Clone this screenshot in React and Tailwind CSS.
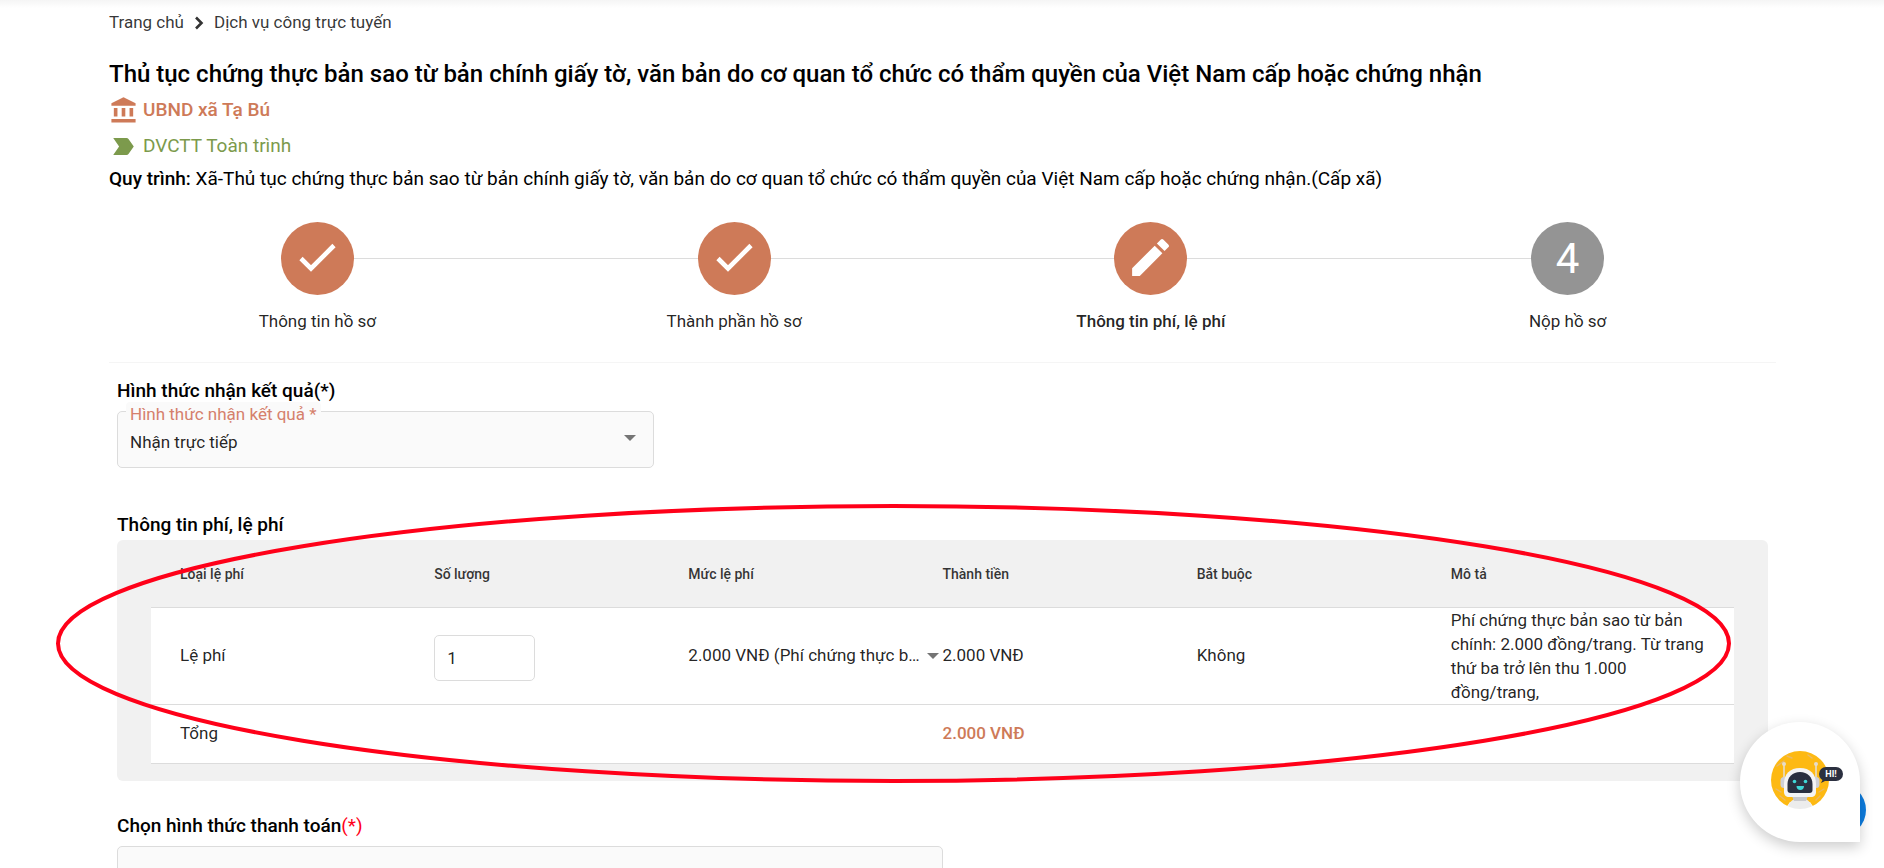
import { useState } from "react";
import { MdAccountBalance, MdEdit, MdLabelImportant } from "react-icons/md";

const steps = [
  { label: "Thông tin hồ sơ", state: "done" },
  { label: "Thành phần hồ sơ", state: "done" },
  { label: "Thông tin phí, lệ phí", state: "edit" },
  { label: "Nộp hồ sơ", state: "todo" },
];

const columns = ["Loại lệ phí", "Số lượng", "Mức lệ phí", "Thành tiền", "Bắt buộc", "Mô tả"];

export default function App() {
  return (
    <div className="relative h-screen overflow-hidden bg-white font-['Roboto',sans-serif] text-[17px] text-black/87">
      <div className="absolute inset-x-0 top-0 h-2 bg-linear-to-b from-neutral-100 to-white" />
      <main className="relative pt-[11px] pr-27 pl-[109px]">
        <Breadcrumb />
        <header className="mt-[23px] text-black">
          <h1 className="text-2xl leading-8 font-medium">
            Thủ tục chứng thực bản sao từ bản chính giấy tờ, văn bản do cơ quan tổ chức có thẩm quyền của Việt Nam cấp hoặc chứng nhận
          </h1>
          <p className="mt-1 flex h-8 items-center gap-[5px] text-[19px] font-medium text-[#ce7a58]">
            <MdAccountBalance size={29} />
            UBND xã Tạ Bú
          </p>
          <p className="mt-1 flex h-8 items-center gap-[5px] text-[19px] text-[#7c9a4c]">
            <MdLabelImportant size={29} />
            DVCTT Toàn trình
          </p>
          <p className="mt-[3px] text-[19px] leading-7">
            <b className="font-medium">Quy trình:</b> Xã-Thủ tục chứng thực bản sao từ bản chính giấy tờ, văn bản do cơ quan tổ chức có thẩm quyền của Việt Nam cấp hoặc chứng nhận.(Cấp xã)
          </p>
        </header>
        <Stepper />
        <form className="px-2 pt-3.5">
          <ReceiveSection />
          <FeeSection />
          <PaymentSection />
        </form>
      </main>
      <svg className="pointer-events-none absolute top-0 left-0 h-[868px] w-[1884px]" viewBox="0 0 1884 868" fill="none" aria-hidden="true">
        <ellipse cx="893.500" cy="643.500" rx="835.500" ry="137.500" stroke="#ff0019" strokeWidth="4" />
      </svg>
      <ChatWidget />
    </div>
  );
}

function Breadcrumb() {
  return (
    <nav className="flex h-6 items-center gap-2.5 text-black/80">
      <a href="#home">Trang chủ</a>
      <svg className="h-3.5 w-2.5" viewBox="0 0 10 14" fill="none" stroke="currentColor" strokeWidth="2.6" aria-hidden="true">
        <path d="M2 1.500L7.500 7 2 12.500" />
      </svg>
      <a href="#services">Dịch vụ công trực tuyến</a>
    </nav>
  );
}

function Stepper() {
  return (
    <ol className="mt-[29px] grid grid-cols-4 border-b border-neutral-100 pb-[29px]">
      {steps.map((s, i) => (
        <li key={s.label} className="flex flex-col items-center">
          <div className="flex w-full items-center">
            <span className={i === 0 ? "h-px flex-1" : "h-px flex-1 bg-[#dcdcdc]"} />
            <StepIcon state={s.state} index={i} />
            <span className={i === 3 ? "h-px flex-1" : "h-px flex-1 bg-[#dcdcdc]"} />
          </div>
          <span className={s.state === "edit" ? "mt-3.5 leading-6 font-medium" : "mt-3.5 leading-6"}>
            {s.label}
          </span>
        </li>
      ))}
    </ol>
  );
}

function StepIcon({ state, index }) {
  if (state === "todo") {
    return (
      <span className="flex size-[73px] items-center justify-center rounded-full bg-[#949494] text-[42px] leading-none text-white">
        {index + 1}
      </span>
    );
  }
  return (
    <span className="flex size-[73px] items-center justify-center rounded-full bg-[#ce7a58] pb-0.5 text-white">
      {state === "done" ? <Check /> : <MdEdit size={49} />}
    </span>
  );
}

function Check() {
  return (
    <svg className="size-12" viewBox="0 0 48 48" fill="none" stroke="currentColor" strokeWidth="4.6" aria-hidden="true">
      <path d="M8 24.500l10 10L41 11.500" />
    </svg>
  );
}

function Arrow() {
  return (
    <svg className="pointer-events-none h-1.5 w-3 shrink-0" viewBox="0 0 12 6" aria-hidden="true">
      <path d="M0 0h12L6 6z" fill="#757575" />
    </svg>
  );
}

function ReceiveSection() {
  return (
    <section>
      <h2 className="text-[19px] leading-7 font-medium text-black">Hình thức nhận kết quả(*)</h2>
      <div className="relative mt-1.5 flex h-[57px] w-[32.5%] items-center rounded-[5px] border border-[#dcdcdc] bg-neutral-50">
        <label htmlFor="receive" className="absolute -top-2.5 left-2 rounded-sm bg-neutral-50 px-1 leading-6 text-[#d5806c]">
          Hình thức nhận kết quả *
        </label>
        <select id="receive" className="w-full appearance-none bg-transparent px-3 pt-1.5 outline-none">
          <option>Nhận trực tiếp</option>
        </select>
        <span className="pointer-events-none absolute top-[23px] right-[17px] flex">
          <Arrow />
        </span>
      </div>
    </section>
  );
}

function FeeSection() {
  const [qty, setQty] = useState("1");
  return (
    <section className="mt-[43px]">
      <h2 className="text-[19px] leading-7 font-medium text-black">Thông tin phí, lệ phí</h2>
      <div className="mt-px rounded-md bg-[#f1f1f1] px-[34px] pb-[17px]">
        <table className="block w-full text-left">
          <thead className="block">
            <tr className="grid h-[68px] grid-cols-6 items-center border-b border-[#dcdcdc] px-[29px]">
              {columns.map((c) => (
                <th key={c} className="text-sm font-medium text-black/80">
                  {c}
                </th>
              ))}
            </tr>
          </thead>
          <tbody className="block bg-white">
            <tr className="grid min-h-[97px] grid-cols-6 items-center border-b border-[#dcdcdc] px-[29px]">
              <td>Lệ phí</td>
              <td>
                <input
                  aria-label="Số lượng"
                  value={qty}
                  onChange={(e) => setQty(e.target.value)}
                  className="mt-1 block h-[46px] w-[101px] rounded-[5px] border border-[#dcdcdc] px-3 outline-none"
                />
              </td>
              <td className="flex min-w-0 items-center gap-1 pr-1">
                <select aria-label="Mức lệ phí" className="min-w-0 flex-1 appearance-none truncate bg-transparent outline-none">
                  <option>2.000 VNĐ (Phí chứng thực bản sao)</option>
                </select>
                <Arrow />
              </td>
              <td>2.000 VNĐ</td>
              <td>Không</td>
              <td className="leading-6">
                Phí chứng thực bản sao từ bản chính: 2.000 đồng/trang. Từ trang thứ ba trở lên thu 1.000 đồng/trang,
              </td>
            </tr>
            <tr className="grid h-[59px] grid-cols-6 items-center border-b border-[#dcdcdc] px-[29px]">
              <td className="col-span-3">Tổng</td>
              <td className="col-span-3 font-medium text-[#ce7a58]">2.000 VNĐ</td>
            </tr>
          </tbody>
        </table>
      </div>
    </section>
  );
}

function PaymentSection() {
  return (
    <section className="mt-[31px]">
      <label htmlFor="payment" className="block text-[19px] leading-7 font-medium text-black">
        Chọn hình thức thanh toán<span className="font-normal text-[#ff0019]">(*)</span>
      </label>
      <select id="payment" className="mt-1.5 block h-[57px] w-1/2 appearance-none rounded-[5px] border border-[#dcdcdc] bg-neutral-50 px-3 outline-none" />
    </section>
  );
}

function ChatWidget() {
  return (
    <>
      <span className="absolute right-[18px] bottom-[31px] size-[54px] rounded-full bg-[#0d7de0]" />
      <button
        type="button"
        aria-label="Chat"
        className="absolute right-6 bottom-[26px] flex size-[120px] items-center justify-center rounded-full rounded-br-none bg-white shadow-[0_5px_14px_rgba(0,0,0,0.2)]"
      >
        <Robot />
      </button>
    </>
  );
}

function Robot() {
  return (
    <svg className="size-[120px]" viewBox="0 0 120 120" aria-hidden="true">
      <defs>
        <clipPath id="face">
          <circle cx="60" cy="58" r="29" />
        </clipPath>
      </defs>
      <circle cx="60" cy="58" r="29" fill="#fdb913" />
      <g stroke="#e9b96a" strokeWidth="1.4" fill="none" strokeLinecap="round">
        <path d="M37 44l7-5M36 67l5 3M79 70l5-3M40 74l5 4M76 78l4-4M47 34l5 2M72 36l-4-3" />
      </g>
      {/* white wedge where the shoulders cut through the disc */}
      <path d="M43 90l7-10h20l7 10z" fill="#fff" />
      <g clipPath="url(#face)">
        <path d="M47 92c0-11 5-16 13-16s13 5 13 16z" fill="#ececec" />
      </g>
      <path d="M52 74h16l-2 5H54z" fill="#c9c9cd" />
      <g stroke="#e6dccb" strokeWidth="1.6">
        <path d="M44 43v16M76 43v16" />
      </g>
      <circle cx="44" cy="42" r="2" fill="#e6dccb" />
      <circle cx="76" cy="42" r="2" fill="#e6dccb" />
      <rect x="40.500" y="55" width="7" height="11" rx="3.500" fill="#cfd0d6" />
      <rect x="72.500" y="55" width="7" height="11" rx="3.500" fill="#cfd0d6" />
      <path d="M44 62c0-10 6-16 16-16s16 6 16 16v8c0 3-2 5-5 5H49c-3 0-5-2-5-5z" fill="#f4f4f5" />
      <path d="M47.500 62c0-7 5-12 12.500-12s12.500 5 12.500 12v6c0 2-1 3-3 3h-19c-2 0-3-1-3-3z" fill="#2b3040" />
      <circle cx="54.500" cy="59.500" r="1.800" fill="#3fd6d6" />
      <circle cx="65.500" cy="59.500" r="1.800" fill="#3fd6d6" />
      <path d="M56.500 64h7.500c0 2.400-1.500 4-3.700 4s-3.800-1.600-3.800-4z" fill="#3fd6d6" />
      <rect x="79" y="45" width="24" height="14" rx="7" fill="#2b3040" />
      <path d="M83 57l-2 4 6-3z" fill="#2b3040" />
      <text x="91" y="55" textAnchor="middle" fontSize="9" fontWeight="700" fill="#fff">HI!</text>
    </svg>
  );
}
